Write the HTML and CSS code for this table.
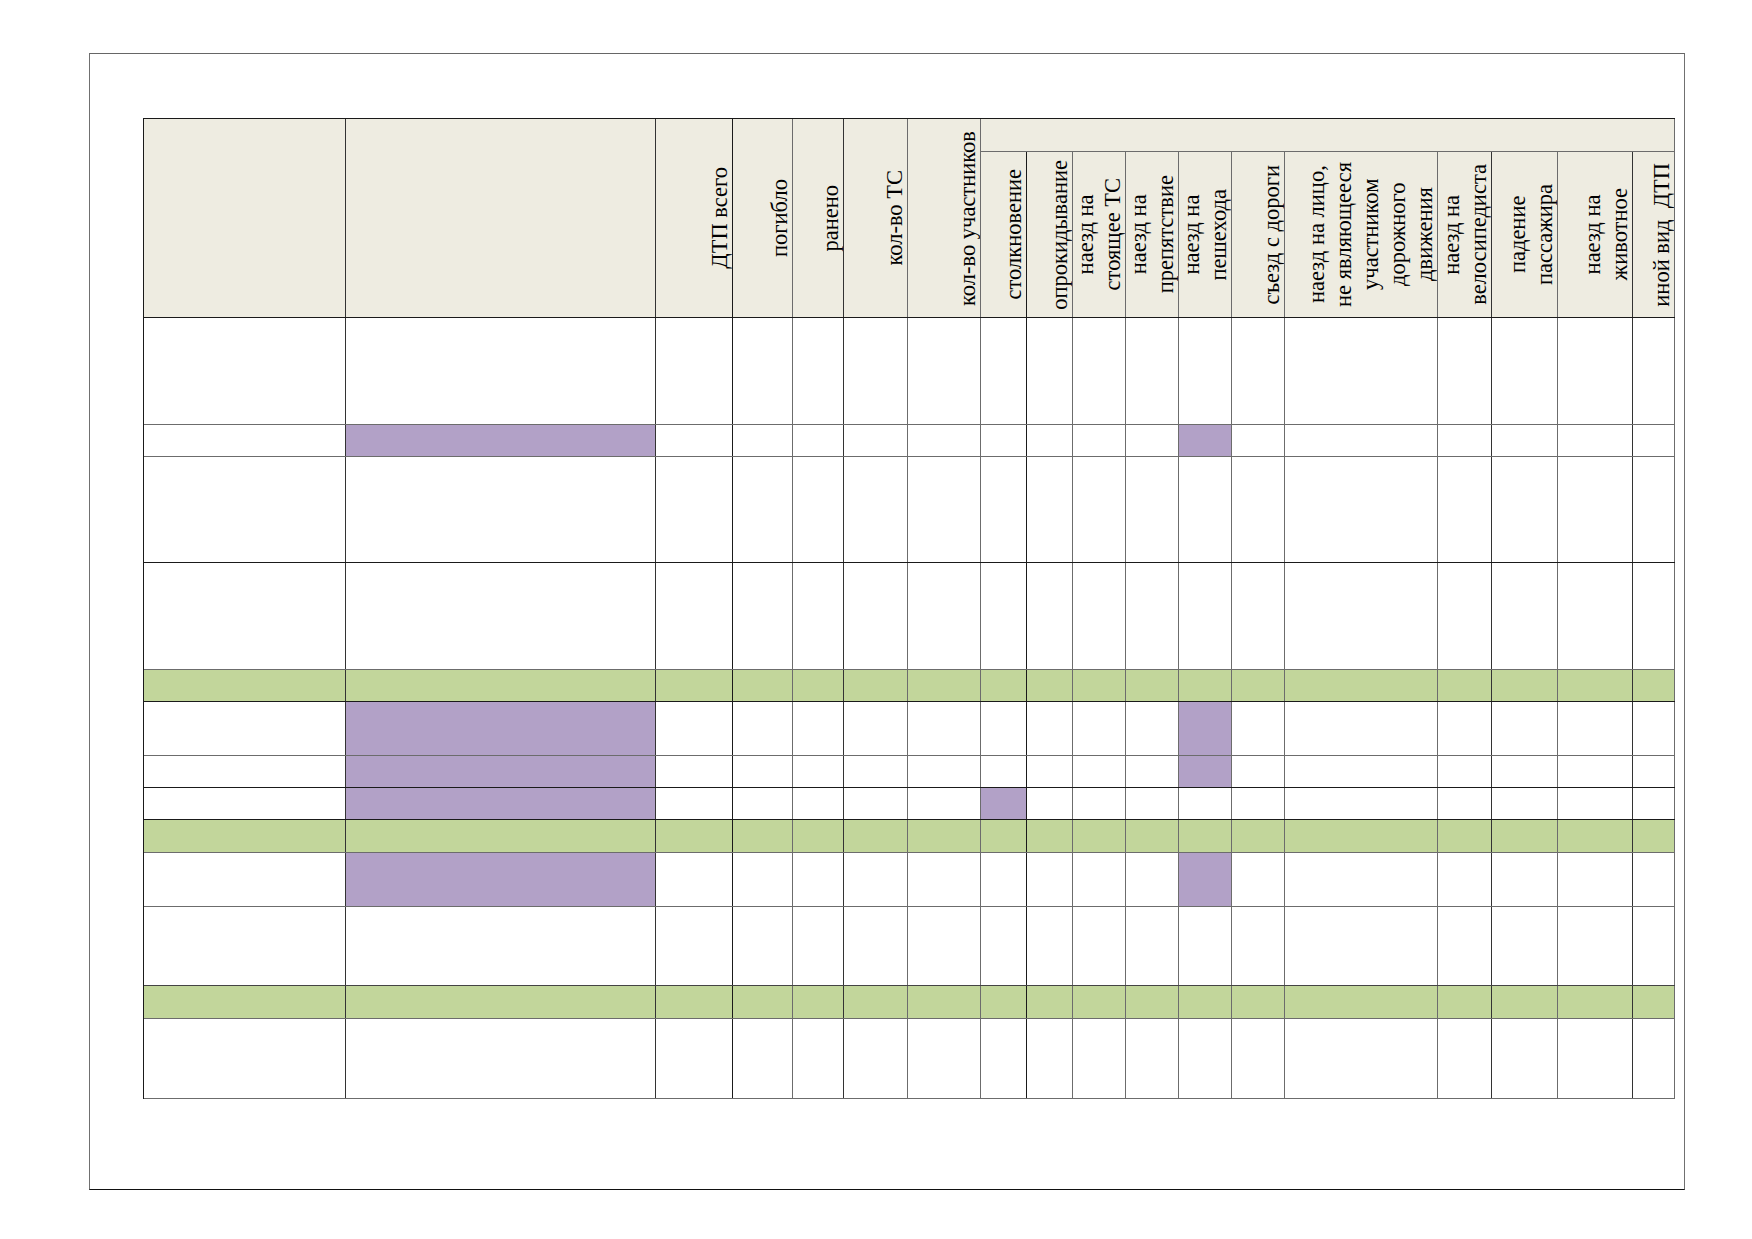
FILE: index.html
```html
<!DOCTYPE html>
<html lang="ru">
<head>
<meta charset="utf-8">
<title>ДТП</title>
<link rel="stylesheet" href="styles.css">
</head>
<body>
<div class="page">
  <div class="frame">
    <div class="table">
      <div class="thead">
        <div class="h span2 dk"></div>
        <div class="h span2 dk"></div>
        <div class="h span2 bk"><span class="vt">ДТП всего</span></div>
        <div class="h span2"><span class="vt">погибло</span></div>
        <div class="h span2 dk"><span class="vt">ранено</span></div>
        <div class="h span2"><span class="vt">кол-во ТС</span></div>
        <div class="h span2"><span class="vt">кол-во участников</span></div>
        <div class="h group"></div>
        <div class="h bk"><span class="vt">столкновение</span></div>
        <div class="h"><span class="vt">опрокидывание</span></div>
        <div class="h"><span class="vt">наезд на<br>стоящее ТС</span></div>
        <div class="h"><span class="vt">наезд на<br>препятствие</span></div>
        <div class="h"><span class="vt">наезд на<br>пешехода</span></div>
        <div class="h"><span class="vt">съезд с дороги</span></div>
        <div class="h"><span class="vt">наезд на лицо,<br>не являющееся<br>участником<br>дорожного<br>движения</span></div>
        <div class="h dk"><span class="vt">наезд на<br>велосипедиста</span></div>
        <div class="h"><span class="vt">падение<br>пассажира</span></div>
        <div class="h dk"><span class="vt">наезд на<br>животное</span></div>
        <div class="h"><span class="vt">иной вид&nbsp;&nbsp;ДТП</span></div>
      </div>

      <div class="row r-107 line-gray">
        <div class="c"></div><div class="c"></div><div class="c"></div><div class="c"></div><div class="c"></div><div class="c"></div><div class="c"></div><div class="c"></div><div class="c"></div><div class="c"></div><div class="c"></div><div class="c"></div><div class="c"></div><div class="c"></div><div class="c"></div><div class="c"></div><div class="c"></div><div class="c"></div>
      </div>
      <div class="row r-32 line-gray">
        <div class="c"></div><div class="c pu"></div><div class="c"></div><div class="c"></div><div class="c"></div><div class="c"></div><div class="c"></div><div class="c"></div><div class="c"></div><div class="c"></div><div class="c"></div><div class="c pu"></div><div class="c"></div><div class="c"></div><div class="c"></div><div class="c"></div><div class="c"></div><div class="c"></div>
      </div>
      <div class="row r-106 line-dark">
        <div class="c"></div><div class="c"></div><div class="c"></div><div class="c"></div><div class="c"></div><div class="c"></div><div class="c"></div><div class="c"></div><div class="c"></div><div class="c"></div><div class="c"></div><div class="c"></div><div class="c"></div><div class="c"></div><div class="c"></div><div class="c"></div><div class="c"></div><div class="c"></div>
      </div>
      <div class="row r-107 line-gray">
        <div class="c"></div><div class="c"></div><div class="c"></div><div class="c"></div><div class="c"></div><div class="c"></div><div class="c"></div><div class="c"></div><div class="c"></div><div class="c"></div><div class="c"></div><div class="c"></div><div class="c"></div><div class="c"></div><div class="c"></div><div class="c"></div><div class="c"></div><div class="c"></div>
      </div>
      <div class="row r-32 line-dark green">
        <div class="c"></div><div class="c"></div><div class="c"></div><div class="c"></div><div class="c"></div><div class="c"></div><div class="c"></div><div class="c"></div><div class="c"></div><div class="c"></div><div class="c"></div><div class="c"></div><div class="c"></div><div class="c"></div><div class="c"></div><div class="c"></div><div class="c"></div><div class="c"></div>
      </div>
      <div class="row r-54 line-gray">
        <div class="c"></div><div class="c pu"></div><div class="c"></div><div class="c"></div><div class="c"></div><div class="c"></div><div class="c"></div><div class="c"></div><div class="c"></div><div class="c"></div><div class="c"></div><div class="c pu"></div><div class="c"></div><div class="c"></div><div class="c"></div><div class="c"></div><div class="c"></div><div class="c"></div>
      </div>
      <div class="row r-32 line-dark">
        <div class="c"></div><div class="c pu"></div><div class="c"></div><div class="c"></div><div class="c"></div><div class="c"></div><div class="c"></div><div class="c"></div><div class="c"></div><div class="c"></div><div class="c"></div><div class="c pu"></div><div class="c"></div><div class="c"></div><div class="c"></div><div class="c"></div><div class="c"></div><div class="c"></div>
      </div>
      <div class="row r-32 line-dark">
        <div class="c"></div><div class="c pu"></div><div class="c"></div><div class="c"></div><div class="c"></div><div class="c"></div><div class="c"></div><div class="c pu"></div><div class="c"></div><div class="c"></div><div class="c"></div><div class="c"></div><div class="c"></div><div class="c"></div><div class="c"></div><div class="c"></div><div class="c"></div><div class="c"></div>
      </div>
      <div class="row r-33 line-gray green">
        <div class="c"></div><div class="c"></div><div class="c"></div><div class="c"></div><div class="c"></div><div class="c"></div><div class="c"></div><div class="c"></div><div class="c"></div><div class="c"></div><div class="c"></div><div class="c"></div><div class="c"></div><div class="c"></div><div class="c"></div><div class="c"></div><div class="c"></div><div class="c"></div>
      </div>
      <div class="row r-54 line-gray">
        <div class="c"></div><div class="c pu"></div><div class="c"></div><div class="c"></div><div class="c"></div><div class="c"></div><div class="c"></div><div class="c"></div><div class="c"></div><div class="c"></div><div class="c"></div><div class="c pu"></div><div class="c"></div><div class="c"></div><div class="c"></div><div class="c"></div><div class="c"></div><div class="c"></div>
      </div>
      <div class="row r-79 line-mid">
        <div class="c"></div><div class="c"></div><div class="c"></div><div class="c"></div><div class="c"></div><div class="c"></div><div class="c"></div><div class="c"></div><div class="c"></div><div class="c"></div><div class="c"></div><div class="c"></div><div class="c"></div><div class="c"></div><div class="c"></div><div class="c"></div><div class="c"></div><div class="c"></div>
      </div>
      <div class="row r-33 line-gray green">
        <div class="c"></div><div class="c"></div><div class="c"></div><div class="c"></div><div class="c"></div><div class="c"></div><div class="c"></div><div class="c"></div><div class="c"></div><div class="c"></div><div class="c"></div><div class="c"></div><div class="c"></div><div class="c"></div><div class="c"></div><div class="c"></div><div class="c"></div><div class="c"></div>
      </div>
      <div class="row r-80 line-gray">
        <div class="c"></div><div class="c"></div><div class="c"></div><div class="c"></div><div class="c"></div><div class="c"></div><div class="c"></div><div class="c"></div><div class="c"></div><div class="c"></div><div class="c"></div><div class="c"></div><div class="c"></div><div class="c"></div><div class="c"></div><div class="c"></div><div class="c"></div><div class="c"></div>
      </div>
    </div>
  </div>
</div>
</body>
</html>
```
FILE: styles.css
```css
:root {
  --cols: 202px 310px 77px 60px 51px 64px 73px 46px 46px 53px 53px 53px 53px 153px 54px 66px 75px 42px;
  --black: #1a1a1a;
  --dark: #333333;
  --gray: #6c6c6c;
  --beige: #eeece1;
  --purple: #b2a1c7;
  --green: #c2d69b;
}

* { box-sizing: border-box; }

html, body {
  margin: 0;
  padding: 0;
  background: #ffffff;
}

body {
  width: 1752px;
  height: 1239px;
  font-family: "Liberation Serif", "Times New Roman", serif;
  color: #000000;
}

.page {
  padding: 53px 0 0 89px;
}

.frame {
  width: 1596px;
  height: 1137px;
  border: 1px solid #707070;
  border-top-color: #666666;
  border-bottom-color: #111111;
  padding: 64px 0 0 53px;
}

.table {
  width: 1532px;
  border-top: 1px solid var(--black);
  border-left: 1px solid var(--black);
  display: flex;
  flex-direction: column;
}

/* header */
.thead {
  display: grid;
  grid-template-columns: var(--cols);
  grid-template-rows: 33px 165px;
  height: 199px;
  background: var(--beige);
  border-bottom: 1px solid var(--black);
}

.h {
  border-right: 1px solid var(--gray);
  display: flex;
  justify-content: flex-end;
  align-items: center;
  overflow: visible;
}
.h.dk { border-right-color: var(--dark); }
.h.bk { border-right-color: var(--black); }

.h.span2 { grid-row: 1 / span 2; }

.h.group {
  grid-column: 8 / span 11;
  grid-row: 1;
  border-bottom: 1px solid var(--gray);
}

.vt {
  writing-mode: vertical-rl;
  transform: rotate(180deg);
  text-align: center;
  white-space: nowrap;
  font-size: 22.5px;
  line-height: 27px;
  margin-right: -1px;
}

/* body rows */
.row {
  display: grid;
  grid-template-columns: var(--cols);
  border-bottom: 1px solid var(--gray);
}
.row.line-dark { border-bottom-color: var(--black); }
.row.line-mid { border-bottom-color: #444444; }
.row.line-gray { border-bottom-color: var(--gray); }
.row.green { background: var(--green); }

.r-107 { height: 107px; }
.r-106 { height: 106px; }
.r-80 { height: 80px; }
.r-79 { height: 79px; }
.r-54 { height: 54px; }
.r-33 { height: 33px; }
.r-32 { height: 32px; }

.c {
  border-right: 1px solid var(--gray);
}
.c.pu { background: var(--purple); }

.row > .c:nth-child(1),
.row > .c:nth-child(2),
.row > .c:nth-child(5),
.row > .c:nth-child(15),
.row > .c:nth-child(17) { border-right-color: var(--dark); }

.row > .c:nth-child(3),
.row > .c:nth-child(8) { border-right-color: var(--black); }
```
